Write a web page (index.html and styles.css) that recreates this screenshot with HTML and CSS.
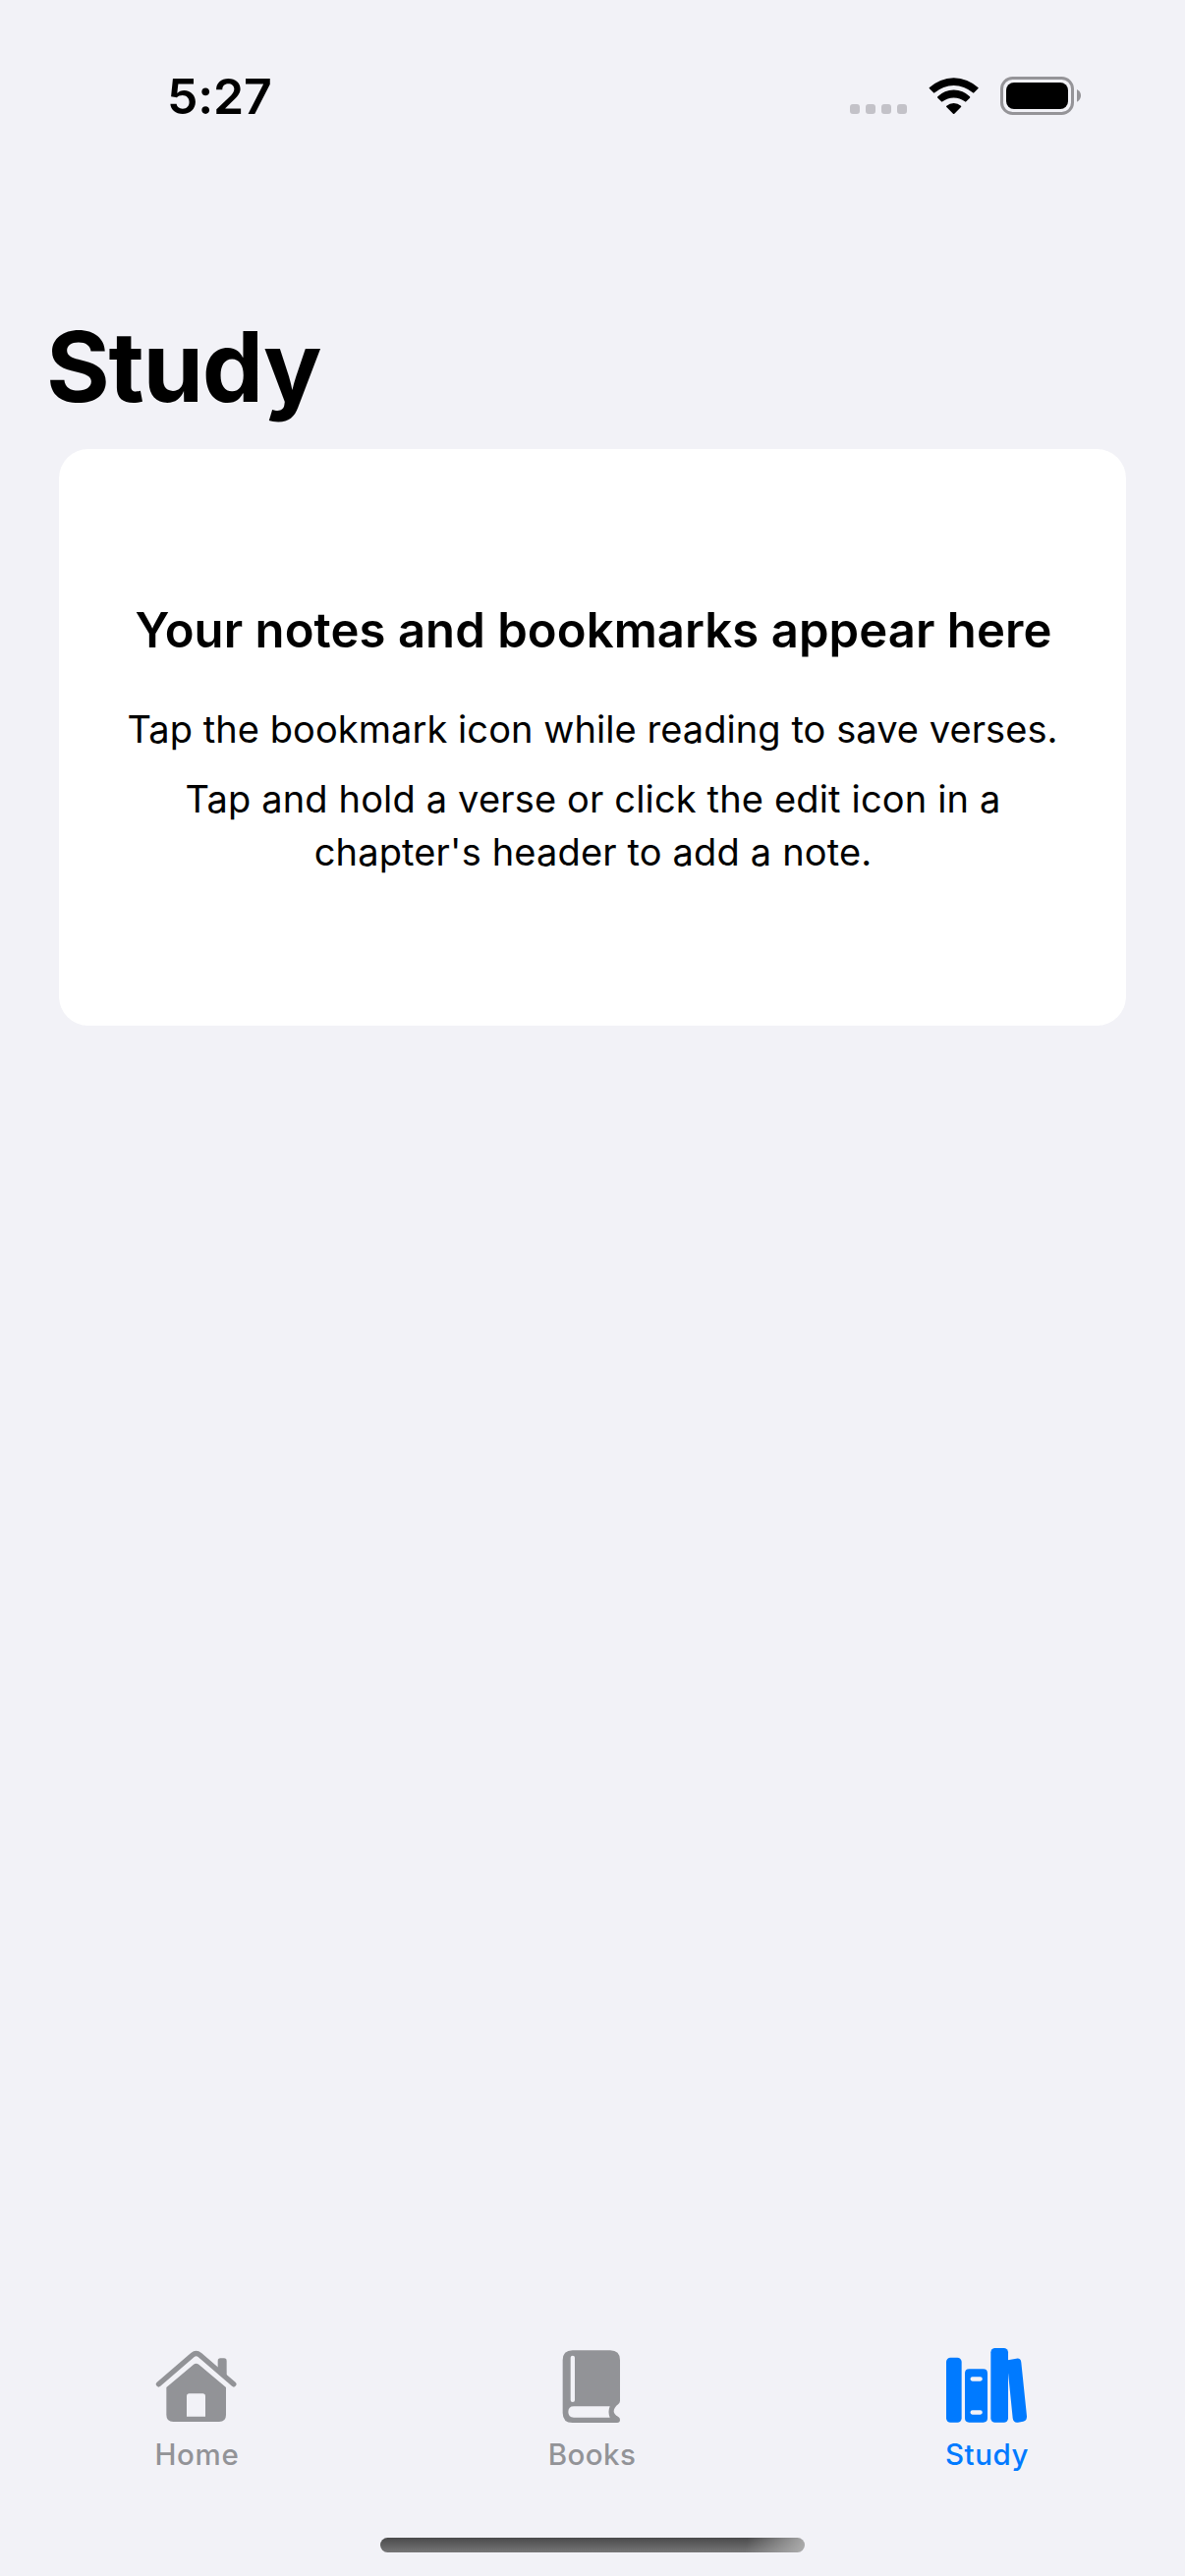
FILE: index.html
```html
<!DOCTYPE html>
<html lang="en">
<head>
<meta charset="utf-8">
<title>Study</title>
<link rel="stylesheet" href="styles.css">
</head>
<body>
<div class="screen">
  <div class="status-bar">
    <span class="status-time">5:27</span>
    <svg class="status-icons" viewBox="0 0 810 240" aria-hidden="true">
      <g fill="#c3c2c8">
        <rect x="45" y="138" width="30" height="30" rx="9"/>
        <rect x="93" y="138" width="30" height="30" rx="9"/>
        <rect x="141" y="138" width="30" height="30" rx="9"/>
        <rect x="189" y="138" width="30" height="30" rx="9"/>
      </g>
      <path d="M287 88A108.7 108.7 0 0 1 437 88Q438 90 436 91L424 103Q422 105 420 103A88 88 0 0 0 304 103Q302 105 300 103L288 91Q286 90 287 88Z"/>
      <path d="M313 115A69 69 0 0 1 411 115Q413 117 411 119L400 130Q398 132 396 130A56 56 0 0 0 328 130Q326 132 324 130L313 119Q311 117 313 115Z"/>
      <path d="M340 143A34 34 0 0 1 384 143Q386 145 384 147L364 167Q362 169 360 167L340 147Q338 145 340 143Z"/>
      <rect x="508.5" y="58.5" width="216" height="108" rx="33" fill="none" stroke="#959498" stroke-width="9"/>
      <rect x="522" y="72" width="189" height="81" rx="24"/>
      <path d="M738 93Q750 99 750 112Q750 125 738 131Z" fill="#959498"/>
    </svg>
  </div>

  <h1 class="page-title">Study</h1>

  <main class="card">
    <h2 class="card-heading">Your notes and bookmarks appear here</h2>
    <p class="card-text">Tap the bookmark icon while reading to save verses.</p>
    <p class="card-text card-text-wide">Tap and hold a verse or click the edit icon in a<br>chapter's header to add a note.</p>
  </main>

  <footer class="footer">
    <nav class="tab-bar">
      <a class="tab">
        <svg class="tab-icon" viewBox="3 9 360 300" aria-hidden="true">
          <path d="M64.500 170.500L168 81Q179 72 190 81L293.500 170.500" fill="none" stroke="currentColor" stroke-width="16" stroke-linecap="round" stroke-linejoin="round"/>
          <path d="M245 128V99Q245 91 253 91H264Q272 91 272 99V152Z" fill="currentColor"/>
          <path fill-rule="evenodd" d="M88 180L171 110Q179 104 187 110L270 180V264Q270 285 249 285H109Q88 285 88 264ZM158 199Q150 199 150 207V269H207V207Q207 199 199 199Z" fill="currentColor"/>
        </svg>
        <span class="tab-label tab-label-home">Home</span>
      </a>
      <a class="tab">
        <svg class="tab-icon" viewBox="9 9 360 300" aria-hidden="true">
          <path fill-rule="evenodd" d="M128 67H243Q273 67 273 97V221Q273 227 268 231Q254 242 254 253Q254 263 268 270Q273 273 273 279Q273 288 264 288H128Q98 288 98 258V97Q98 67 128 67ZM128.500 83Q122 83 122 89V219Q122 225 128.500 225Q135 225 135 219V89Q135 83 128.500 83ZM132 238Q115 238 115 255Q115 272 132 272H242Q235 255 242 238Z" fill="currentColor"/>
        </svg>
        <span class="tab-label tab-label-books">Books</span>
      </a>
      <a class="tab tab-active">
        <svg class="tab-icon" viewBox="15 9 360 300" aria-hidden="true">
          <g fill="currentColor">
            <rect x="69" y="89" width="47" height="198" rx="13"/>
            <path fill-rule="evenodd" d="M139 124H182Q195 124 195 137V274Q195 287 182 287H139Q126 287 126 274V137Q126 124 139 124ZM149 148A6.500 6.500 0 0 0 149 161H173A6.500 6.500 0 0 0 173 148ZM149 250A6.500 6.500 0 0 0 149 263H173A6.500 6.500 0 0 0 173 250Z"/>
            <rect x="205" y="60" width="53" height="227" rx="13"/>
            <path d="M257 97L283 92Q297 90 298 104L315 268Q316 282 304 284L288 287Q274 289 272 274L257 125Z"/>
          </g>
        </svg>
        <span class="tab-label tab-label-study">Study</span>
      </a>
    </nav>
    <div class="home-indicator"></div>
  </footer>
</div>
</body>
</html>
```
FILE: styles.css
```css
* {
  box-sizing: border-box;
}

body {
  margin: 0;
  background: #f2f2f7;
  color: #000;
  font-family: "Inter", "Liberation Sans", sans-serif;
}

.screen {
  display: flex;
  flex-direction: column;
  width: 1206px;
  height: 2622px;
}

.status-bar {
  display: flex;
  justify-content: space-between;
  align-items: flex-start;
  height: 309px;
  padding: 60px 86px 0 170px;
}

.status-time {
  padding-top: 8px;
  font-size: 50px;
  font-weight: 600;
  line-height: 60px;
  letter-spacing: -0.18px;
}

.status-icons {
  width: 270px;
  height: 80px;
}

.page-title {
  margin: 0;
  padding-left: 47px;
  font-size: 99px;
  font-weight: 700;
  line-height: 128px;
  letter-spacing: -1.28px;
}

.card {
  height: 587px;
  margin: 20px 60px 0;
  padding-top: 154px;
  border-radius: 30px;
  background: #fff;
  text-align: center;
}

.card-heading {
  margin: 0;
  padding-left: 2px;
  font-size: 49px;
  font-weight: 600;
  line-height: 61px;
  letter-spacing: 0.07px;
}

.card-text {
  margin: 43px 0 0;
  font-size: 38px;
  line-height: 54px;
  letter-spacing: 0.065px;
}

.card-text-wide {
  margin-top: 17px;
  padding-left: 1px;
  letter-spacing: 0.16px;
}

.footer {
  display: flex;
  flex-direction: column;
  align-items: center;
  height: 249px;
  margin-top: auto;
}

.tab-bar {
  display: grid;
  grid-template-columns: repeat(3, 1fr);
  width: 100%;
}

.tab {
  display: flex;
  flex-direction: column;
  align-items: center;
  gap: 5px;
  color: #929397;
}

.tab-active {
  color: #007aff;
}

.tab-icon {
  width: 120px;
  height: 100px;
}

.tab-label {
  padding-right: 1px;
  font-size: 29.5px;
  font-weight: 500;
  line-height: 40px;
}

.tab-label-home {
  letter-spacing: 0.7px;
}

.tab-label-books {
  letter-spacing: 0.4px;
}

.tab-label-study {
  letter-spacing: 0.6px;
}

.home-indicator {
  width: 432px;
  height: 15px;
  margin-top: 65px;
  border-radius: 8px;
  background:
    linear-gradient(100deg, rgba(180, 180, 180, 0) 86%, rgba(180, 180, 180, 0.9) 100%),
    linear-gradient(#4a4a4b, #767677);
}
```
